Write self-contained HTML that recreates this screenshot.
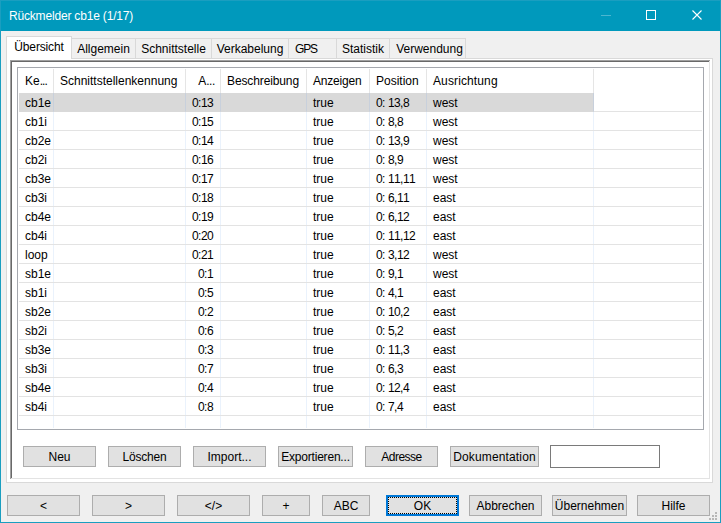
<!DOCTYPE html><html><head><meta charset="utf-8"><style>
*{margin:0;padding:0;box-sizing:border-box}
html,body{width:721px;height:523px;overflow:hidden;background:#f0f0f0}
body{position:relative;font-family:"Liberation Sans",sans-serif;font-size:12px;color:#000}
.a{position:absolute}
.t{position:absolute;line-height:20px;white-space:nowrap;height:20px}
.btn{position:absolute;background:#e1e1e1;border:1px solid #adadad}
</style></head><body>
<div class="a" style="left:0px;top:0px;width:721px;height:523px;background:#1a9ec0;"></div>
<div class="a" style="left:1px;top:1px;width:719px;height:521px;background:#0099bc;"></div>
<div class="a" style="left:1px;top:31px;width:719px;height:491px;background:#f0f0f0;"></div>
<div class="a" style="left:2px;top:31px;width:717px;height:490px;background:#f0f0f0;"></div>
<div class="t" style="left:9px;top:6px;color:#fff;letter-spacing:-0.18px">Rückmelder cb1e (1/17)</div>
<div class="a" style="left:601px;top:15px;width:10px;height:1px;background:#4cb6d0;"></div>
<div class="a" style="left:646px;top:10px;width:10px;height:10px;border:1px solid #fff"></div>
<svg class="a" style="left:691px;top:9px" width="12" height="12" viewBox="0 0 12 12"><path d="M1.5 1.5L10.5 10.5M10.5 1.5L1.5 10.5" stroke="#fff" stroke-width="1.1" fill="none"/></svg>
<div class="a" style="left:6px;top:58px;width:707px;height:425px;background:#d9d9d9;"></div>
<div class="a" style="left:7px;top:59px;width:705px;height:423px;background:#ffffff;"></div>
<div class="a" style="left:71px;top:38px;width:65px;height:21px;background:#d9d9d9;"></div>
<div class="a" style="left:72px;top:39px;width:63px;height:19px;background:#f0f0f0;"></div>
<div class="a" style="left:135px;top:38px;width:77px;height:21px;background:#d9d9d9;"></div>
<div class="a" style="left:136px;top:39px;width:75px;height:19px;background:#f0f0f0;"></div>
<div class="a" style="left:211px;top:38px;width:78px;height:21px;background:#d9d9d9;"></div>
<div class="a" style="left:212px;top:39px;width:76px;height:19px;background:#f0f0f0;"></div>
<div class="a" style="left:288px;top:38px;width:49px;height:21px;background:#d9d9d9;"></div>
<div class="a" style="left:289px;top:39px;width:47px;height:19px;background:#f0f0f0;"></div>
<div class="a" style="left:336px;top:38px;width:54px;height:21px;background:#d9d9d9;"></div>
<div class="a" style="left:337px;top:39px;width:52px;height:19px;background:#f0f0f0;"></div>
<div class="a" style="left:389px;top:38px;width:77px;height:21px;background:#d9d9d9;"></div>
<div class="a" style="left:390px;top:39px;width:75px;height:19px;background:#f0f0f0;"></div>
<div class="t" style="left:72px;top:39px;width:63px;text-align:center;">Allgemein</div>
<div class="t" style="left:136px;top:39px;width:75px;text-align:center;">Schnittstelle</div>
<div class="t" style="left:212px;top:39px;width:76px;text-align:center;">Verkabelung</div>
<div class="t" style="left:295px;top:39px;letter-spacing:-1.2px">GPS</div>
<div class="t" style="left:337px;top:39px;width:52px;text-align:center;">Statistik</div>
<div class="t" style="left:392px;top:39px;width:75px;text-align:center;">Verwendung</div>
<div class="a" style="left:6px;top:36px;width:66px;height:23px;background:#d9d9d9;"></div>
<div class="a" style="left:7px;top:37px;width:64px;height:23px;background:#ffffff;"></div>
<div class="t" style="left:7px;top:37px;width:64px;text-align:center;letter-spacing:-0.15px">Übersicht</div>
<div class="a" style="left:10px;top:60px;width:701px;height:420px;background:#ffffff;"></div>
<div class="a" style="left:10px;top:60px;width:700px;height:419px;background:#e3e3e3;"></div>
<div class="a" style="left:10px;top:60px;width:700px;height:1px;background:#a0a0a0;"></div>
<div class="a" style="left:10px;top:60px;width:1px;height:419px;background:#a0a0a0;"></div>
<div class="a" style="left:11px;top:61px;width:698px;height:1px;background:#696969;"></div>
<div class="a" style="left:11px;top:61px;width:1px;height:417px;background:#696969;"></div>
<div class="a" style="left:12px;top:62px;width:697px;height:416px;background:#ffffff;"></div>
<div class="a" style="left:17px;top:67px;width:687px;height:363px;background:#a5a8ae;"></div>
<div class="a" style="left:18px;top:68px;width:685px;height:361px;background:#ffffff;"></div>
<div class="a" style="left:53px;top:69px;width:1px;height:24px;background:#e5e5e5;"></div>
<div class="a" style="left:185px;top:69px;width:1px;height:24px;background:#e5e5e5;"></div>
<div class="a" style="left:220px;top:69px;width:1px;height:24px;background:#e5e5e5;"></div>
<div class="a" style="left:306px;top:69px;width:1px;height:24px;background:#e5e5e5;"></div>
<div class="a" style="left:369px;top:69px;width:1px;height:24px;background:#e5e5e5;"></div>
<div class="a" style="left:426px;top:69px;width:1px;height:24px;background:#e5e5e5;"></div>
<div class="a" style="left:593px;top:69px;width:1px;height:24px;background:#e5e5e5;"></div>
<div class="a" style="left:19px;top:111px;width:683px;height:1px;background:#e3e3e3;"></div>
<div class="a" style="left:19px;top:130px;width:683px;height:1px;background:#e3e3e3;"></div>
<div class="a" style="left:19px;top:149px;width:683px;height:1px;background:#e3e3e3;"></div>
<div class="a" style="left:19px;top:168px;width:683px;height:1px;background:#e3e3e3;"></div>
<div class="a" style="left:19px;top:187px;width:683px;height:1px;background:#e3e3e3;"></div>
<div class="a" style="left:19px;top:206px;width:683px;height:1px;background:#e3e3e3;"></div>
<div class="a" style="left:19px;top:225px;width:683px;height:1px;background:#e3e3e3;"></div>
<div class="a" style="left:19px;top:244px;width:683px;height:1px;background:#e3e3e3;"></div>
<div class="a" style="left:19px;top:263px;width:683px;height:1px;background:#e3e3e3;"></div>
<div class="a" style="left:19px;top:282px;width:683px;height:1px;background:#e3e3e3;"></div>
<div class="a" style="left:19px;top:301px;width:683px;height:1px;background:#e3e3e3;"></div>
<div class="a" style="left:19px;top:320px;width:683px;height:1px;background:#e3e3e3;"></div>
<div class="a" style="left:19px;top:339px;width:683px;height:1px;background:#e3e3e3;"></div>
<div class="a" style="left:19px;top:358px;width:683px;height:1px;background:#e3e3e3;"></div>
<div class="a" style="left:19px;top:377px;width:683px;height:1px;background:#e3e3e3;"></div>
<div class="a" style="left:19px;top:396px;width:683px;height:1px;background:#e3e3e3;"></div>
<div class="a" style="left:19px;top:415px;width:683px;height:1px;background:#e3e3e3;"></div>
<div class="a" style="left:19px;top:93px;width:575px;height:19px;background:#d9d9d9;"></div>
<div class="a" style="left:53px;top:112px;width:1px;height:316px;background:#eaf2fc;"></div>
<div class="a" style="left:53px;top:93px;width:1px;height:18px;background:#c8d0dc;"></div>
<div class="a" style="left:53px;top:111px;width:1px;height:1px;background:#d0d4da;"></div>
<div class="a" style="left:185px;top:112px;width:1px;height:316px;background:#eaf2fc;"></div>
<div class="a" style="left:185px;top:93px;width:1px;height:18px;background:#c8d0dc;"></div>
<div class="a" style="left:185px;top:111px;width:1px;height:1px;background:#d0d4da;"></div>
<div class="a" style="left:220px;top:112px;width:1px;height:316px;background:#eaf2fc;"></div>
<div class="a" style="left:220px;top:93px;width:1px;height:18px;background:#c8d0dc;"></div>
<div class="a" style="left:220px;top:111px;width:1px;height:1px;background:#d0d4da;"></div>
<div class="a" style="left:306px;top:112px;width:1px;height:316px;background:#eaf2fc;"></div>
<div class="a" style="left:306px;top:93px;width:1px;height:18px;background:#c8d0dc;"></div>
<div class="a" style="left:306px;top:111px;width:1px;height:1px;background:#d0d4da;"></div>
<div class="a" style="left:369px;top:112px;width:1px;height:316px;background:#eaf2fc;"></div>
<div class="a" style="left:369px;top:93px;width:1px;height:18px;background:#c8d0dc;"></div>
<div class="a" style="left:369px;top:111px;width:1px;height:1px;background:#d0d4da;"></div>
<div class="a" style="left:426px;top:112px;width:1px;height:316px;background:#eaf2fc;"></div>
<div class="a" style="left:426px;top:93px;width:1px;height:18px;background:#c8d0dc;"></div>
<div class="a" style="left:426px;top:111px;width:1px;height:1px;background:#d0d4da;"></div>
<div class="a" style="left:593px;top:112px;width:1px;height:316px;background:#eaf2fc;"></div>
<div class="a" style="left:593px;top:93px;width:1px;height:18px;background:#c8d0dc;"></div>
<div class="a" style="left:593px;top:111px;width:1px;height:1px;background:#d0d4da;"></div>
<div class="a" style="left:53px;top:130px;width:1px;height:1px;background:#e3e3e3;"></div>
<div class="a" style="left:185px;top:130px;width:1px;height:1px;background:#e3e3e3;"></div>
<div class="a" style="left:220px;top:130px;width:1px;height:1px;background:#e3e3e3;"></div>
<div class="a" style="left:306px;top:130px;width:1px;height:1px;background:#e3e3e3;"></div>
<div class="a" style="left:369px;top:130px;width:1px;height:1px;background:#e3e3e3;"></div>
<div class="a" style="left:426px;top:130px;width:1px;height:1px;background:#e3e3e3;"></div>
<div class="a" style="left:593px;top:130px;width:1px;height:1px;background:#e3e3e3;"></div>
<div class="a" style="left:53px;top:149px;width:1px;height:1px;background:#e3e3e3;"></div>
<div class="a" style="left:185px;top:149px;width:1px;height:1px;background:#e3e3e3;"></div>
<div class="a" style="left:220px;top:149px;width:1px;height:1px;background:#e3e3e3;"></div>
<div class="a" style="left:306px;top:149px;width:1px;height:1px;background:#e3e3e3;"></div>
<div class="a" style="left:369px;top:149px;width:1px;height:1px;background:#e3e3e3;"></div>
<div class="a" style="left:426px;top:149px;width:1px;height:1px;background:#e3e3e3;"></div>
<div class="a" style="left:593px;top:149px;width:1px;height:1px;background:#e3e3e3;"></div>
<div class="a" style="left:53px;top:168px;width:1px;height:1px;background:#e3e3e3;"></div>
<div class="a" style="left:185px;top:168px;width:1px;height:1px;background:#e3e3e3;"></div>
<div class="a" style="left:220px;top:168px;width:1px;height:1px;background:#e3e3e3;"></div>
<div class="a" style="left:306px;top:168px;width:1px;height:1px;background:#e3e3e3;"></div>
<div class="a" style="left:369px;top:168px;width:1px;height:1px;background:#e3e3e3;"></div>
<div class="a" style="left:426px;top:168px;width:1px;height:1px;background:#e3e3e3;"></div>
<div class="a" style="left:593px;top:168px;width:1px;height:1px;background:#e3e3e3;"></div>
<div class="a" style="left:53px;top:187px;width:1px;height:1px;background:#e3e3e3;"></div>
<div class="a" style="left:185px;top:187px;width:1px;height:1px;background:#e3e3e3;"></div>
<div class="a" style="left:220px;top:187px;width:1px;height:1px;background:#e3e3e3;"></div>
<div class="a" style="left:306px;top:187px;width:1px;height:1px;background:#e3e3e3;"></div>
<div class="a" style="left:369px;top:187px;width:1px;height:1px;background:#e3e3e3;"></div>
<div class="a" style="left:426px;top:187px;width:1px;height:1px;background:#e3e3e3;"></div>
<div class="a" style="left:593px;top:187px;width:1px;height:1px;background:#e3e3e3;"></div>
<div class="a" style="left:53px;top:206px;width:1px;height:1px;background:#e3e3e3;"></div>
<div class="a" style="left:185px;top:206px;width:1px;height:1px;background:#e3e3e3;"></div>
<div class="a" style="left:220px;top:206px;width:1px;height:1px;background:#e3e3e3;"></div>
<div class="a" style="left:306px;top:206px;width:1px;height:1px;background:#e3e3e3;"></div>
<div class="a" style="left:369px;top:206px;width:1px;height:1px;background:#e3e3e3;"></div>
<div class="a" style="left:426px;top:206px;width:1px;height:1px;background:#e3e3e3;"></div>
<div class="a" style="left:593px;top:206px;width:1px;height:1px;background:#e3e3e3;"></div>
<div class="a" style="left:53px;top:225px;width:1px;height:1px;background:#e3e3e3;"></div>
<div class="a" style="left:185px;top:225px;width:1px;height:1px;background:#e3e3e3;"></div>
<div class="a" style="left:220px;top:225px;width:1px;height:1px;background:#e3e3e3;"></div>
<div class="a" style="left:306px;top:225px;width:1px;height:1px;background:#e3e3e3;"></div>
<div class="a" style="left:369px;top:225px;width:1px;height:1px;background:#e3e3e3;"></div>
<div class="a" style="left:426px;top:225px;width:1px;height:1px;background:#e3e3e3;"></div>
<div class="a" style="left:593px;top:225px;width:1px;height:1px;background:#e3e3e3;"></div>
<div class="a" style="left:53px;top:244px;width:1px;height:1px;background:#e3e3e3;"></div>
<div class="a" style="left:185px;top:244px;width:1px;height:1px;background:#e3e3e3;"></div>
<div class="a" style="left:220px;top:244px;width:1px;height:1px;background:#e3e3e3;"></div>
<div class="a" style="left:306px;top:244px;width:1px;height:1px;background:#e3e3e3;"></div>
<div class="a" style="left:369px;top:244px;width:1px;height:1px;background:#e3e3e3;"></div>
<div class="a" style="left:426px;top:244px;width:1px;height:1px;background:#e3e3e3;"></div>
<div class="a" style="left:593px;top:244px;width:1px;height:1px;background:#e3e3e3;"></div>
<div class="a" style="left:53px;top:263px;width:1px;height:1px;background:#e3e3e3;"></div>
<div class="a" style="left:185px;top:263px;width:1px;height:1px;background:#e3e3e3;"></div>
<div class="a" style="left:220px;top:263px;width:1px;height:1px;background:#e3e3e3;"></div>
<div class="a" style="left:306px;top:263px;width:1px;height:1px;background:#e3e3e3;"></div>
<div class="a" style="left:369px;top:263px;width:1px;height:1px;background:#e3e3e3;"></div>
<div class="a" style="left:426px;top:263px;width:1px;height:1px;background:#e3e3e3;"></div>
<div class="a" style="left:593px;top:263px;width:1px;height:1px;background:#e3e3e3;"></div>
<div class="a" style="left:53px;top:282px;width:1px;height:1px;background:#e3e3e3;"></div>
<div class="a" style="left:185px;top:282px;width:1px;height:1px;background:#e3e3e3;"></div>
<div class="a" style="left:220px;top:282px;width:1px;height:1px;background:#e3e3e3;"></div>
<div class="a" style="left:306px;top:282px;width:1px;height:1px;background:#e3e3e3;"></div>
<div class="a" style="left:369px;top:282px;width:1px;height:1px;background:#e3e3e3;"></div>
<div class="a" style="left:426px;top:282px;width:1px;height:1px;background:#e3e3e3;"></div>
<div class="a" style="left:593px;top:282px;width:1px;height:1px;background:#e3e3e3;"></div>
<div class="a" style="left:53px;top:301px;width:1px;height:1px;background:#e3e3e3;"></div>
<div class="a" style="left:185px;top:301px;width:1px;height:1px;background:#e3e3e3;"></div>
<div class="a" style="left:220px;top:301px;width:1px;height:1px;background:#e3e3e3;"></div>
<div class="a" style="left:306px;top:301px;width:1px;height:1px;background:#e3e3e3;"></div>
<div class="a" style="left:369px;top:301px;width:1px;height:1px;background:#e3e3e3;"></div>
<div class="a" style="left:426px;top:301px;width:1px;height:1px;background:#e3e3e3;"></div>
<div class="a" style="left:593px;top:301px;width:1px;height:1px;background:#e3e3e3;"></div>
<div class="a" style="left:53px;top:320px;width:1px;height:1px;background:#e3e3e3;"></div>
<div class="a" style="left:185px;top:320px;width:1px;height:1px;background:#e3e3e3;"></div>
<div class="a" style="left:220px;top:320px;width:1px;height:1px;background:#e3e3e3;"></div>
<div class="a" style="left:306px;top:320px;width:1px;height:1px;background:#e3e3e3;"></div>
<div class="a" style="left:369px;top:320px;width:1px;height:1px;background:#e3e3e3;"></div>
<div class="a" style="left:426px;top:320px;width:1px;height:1px;background:#e3e3e3;"></div>
<div class="a" style="left:593px;top:320px;width:1px;height:1px;background:#e3e3e3;"></div>
<div class="a" style="left:53px;top:339px;width:1px;height:1px;background:#e3e3e3;"></div>
<div class="a" style="left:185px;top:339px;width:1px;height:1px;background:#e3e3e3;"></div>
<div class="a" style="left:220px;top:339px;width:1px;height:1px;background:#e3e3e3;"></div>
<div class="a" style="left:306px;top:339px;width:1px;height:1px;background:#e3e3e3;"></div>
<div class="a" style="left:369px;top:339px;width:1px;height:1px;background:#e3e3e3;"></div>
<div class="a" style="left:426px;top:339px;width:1px;height:1px;background:#e3e3e3;"></div>
<div class="a" style="left:593px;top:339px;width:1px;height:1px;background:#e3e3e3;"></div>
<div class="a" style="left:53px;top:358px;width:1px;height:1px;background:#e3e3e3;"></div>
<div class="a" style="left:185px;top:358px;width:1px;height:1px;background:#e3e3e3;"></div>
<div class="a" style="left:220px;top:358px;width:1px;height:1px;background:#e3e3e3;"></div>
<div class="a" style="left:306px;top:358px;width:1px;height:1px;background:#e3e3e3;"></div>
<div class="a" style="left:369px;top:358px;width:1px;height:1px;background:#e3e3e3;"></div>
<div class="a" style="left:426px;top:358px;width:1px;height:1px;background:#e3e3e3;"></div>
<div class="a" style="left:593px;top:358px;width:1px;height:1px;background:#e3e3e3;"></div>
<div class="a" style="left:53px;top:377px;width:1px;height:1px;background:#e3e3e3;"></div>
<div class="a" style="left:185px;top:377px;width:1px;height:1px;background:#e3e3e3;"></div>
<div class="a" style="left:220px;top:377px;width:1px;height:1px;background:#e3e3e3;"></div>
<div class="a" style="left:306px;top:377px;width:1px;height:1px;background:#e3e3e3;"></div>
<div class="a" style="left:369px;top:377px;width:1px;height:1px;background:#e3e3e3;"></div>
<div class="a" style="left:426px;top:377px;width:1px;height:1px;background:#e3e3e3;"></div>
<div class="a" style="left:593px;top:377px;width:1px;height:1px;background:#e3e3e3;"></div>
<div class="a" style="left:53px;top:396px;width:1px;height:1px;background:#e3e3e3;"></div>
<div class="a" style="left:185px;top:396px;width:1px;height:1px;background:#e3e3e3;"></div>
<div class="a" style="left:220px;top:396px;width:1px;height:1px;background:#e3e3e3;"></div>
<div class="a" style="left:306px;top:396px;width:1px;height:1px;background:#e3e3e3;"></div>
<div class="a" style="left:369px;top:396px;width:1px;height:1px;background:#e3e3e3;"></div>
<div class="a" style="left:426px;top:396px;width:1px;height:1px;background:#e3e3e3;"></div>
<div class="a" style="left:593px;top:396px;width:1px;height:1px;background:#e3e3e3;"></div>
<div class="a" style="left:53px;top:415px;width:1px;height:1px;background:#e3e3e3;"></div>
<div class="a" style="left:185px;top:415px;width:1px;height:1px;background:#e3e3e3;"></div>
<div class="a" style="left:220px;top:415px;width:1px;height:1px;background:#e3e3e3;"></div>
<div class="a" style="left:306px;top:415px;width:1px;height:1px;background:#e3e3e3;"></div>
<div class="a" style="left:369px;top:415px;width:1px;height:1px;background:#e3e3e3;"></div>
<div class="a" style="left:426px;top:415px;width:1px;height:1px;background:#e3e3e3;"></div>
<div class="a" style="left:593px;top:415px;width:1px;height:1px;background:#e3e3e3;"></div>
<div class="t" style="left:25px;top:71px;">Ke<span style="letter-spacing:-0.9px">...</span></div>
<div class="t" style="left:60px;top:71px;">Schnittstellenkennung</div>
<div class="t" style="left:15px;top:71px;width:200px;text-align:right;">A<span style="letter-spacing:-0.4px">...</span></div>
<div class="t" style="left:227px;top:71px;letter-spacing:-0.12px">Beschreibung</div>
<div class="t" style="left:313px;top:71px;letter-spacing:-0.2px">Anzeigen</div>
<div class="t" style="left:376px;top:71px;">Position</div>
<div class="t" style="left:433px;top:71px;letter-spacing:0.12px">Ausrichtung</div>
<div class="t" style="left:25px;top:93px;">cb1e</div>
<div class="t" style="left:192px;top:93px">0</div>
<div class="t" style="left:198px;top:93px">:</div>
<div class="t" style="left:201px;top:93px">1</div>
<div class="t" style="left:207px;top:93px">3</div>
<div class="t" style="left:313px;top:93px;">true</div>
<div class="t" style="left:376px;top:93px">0</div>
<div class="t" style="left:382px;top:93px">:</div>
<div class="t" style="left:388px;top:93px">1</div>
<div class="t" style="left:394px;top:93px">3</div>
<div class="t" style="left:400px;top:93px">,</div>
<div class="t" style="left:403px;top:93px">8</div>
<div class="t" style="left:433px;top:93px;">west</div>
<div class="t" style="left:25px;top:112px;">cb1i</div>
<div class="t" style="left:192px;top:112px">0</div>
<div class="t" style="left:198px;top:112px">:</div>
<div class="t" style="left:201px;top:112px">1</div>
<div class="t" style="left:207px;top:112px">5</div>
<div class="t" style="left:313px;top:112px;">true</div>
<div class="t" style="left:376px;top:112px">0</div>
<div class="t" style="left:382px;top:112px">:</div>
<div class="t" style="left:388px;top:112px">8</div>
<div class="t" style="left:394px;top:112px">,</div>
<div class="t" style="left:397px;top:112px">8</div>
<div class="t" style="left:433px;top:112px;">west</div>
<div class="t" style="left:25px;top:131px;">cb2e</div>
<div class="t" style="left:192px;top:131px">0</div>
<div class="t" style="left:198px;top:131px">:</div>
<div class="t" style="left:201px;top:131px">1</div>
<div class="t" style="left:207px;top:131px">4</div>
<div class="t" style="left:313px;top:131px;">true</div>
<div class="t" style="left:376px;top:131px">0</div>
<div class="t" style="left:382px;top:131px">:</div>
<div class="t" style="left:388px;top:131px">1</div>
<div class="t" style="left:394px;top:131px">3</div>
<div class="t" style="left:400px;top:131px">,</div>
<div class="t" style="left:403px;top:131px">9</div>
<div class="t" style="left:433px;top:131px;">west</div>
<div class="t" style="left:25px;top:150px;">cb2i</div>
<div class="t" style="left:192px;top:150px">0</div>
<div class="t" style="left:198px;top:150px">:</div>
<div class="t" style="left:201px;top:150px">1</div>
<div class="t" style="left:207px;top:150px">6</div>
<div class="t" style="left:313px;top:150px;">true</div>
<div class="t" style="left:376px;top:150px">0</div>
<div class="t" style="left:382px;top:150px">:</div>
<div class="t" style="left:388px;top:150px">8</div>
<div class="t" style="left:394px;top:150px">,</div>
<div class="t" style="left:397px;top:150px">9</div>
<div class="t" style="left:433px;top:150px;">west</div>
<div class="t" style="left:25px;top:169px;">cb3e</div>
<div class="t" style="left:192px;top:169px">0</div>
<div class="t" style="left:198px;top:169px">:</div>
<div class="t" style="left:201px;top:169px">1</div>
<div class="t" style="left:207px;top:169px">7</div>
<div class="t" style="left:313px;top:169px;">true</div>
<div class="t" style="left:376px;top:169px">0</div>
<div class="t" style="left:382px;top:169px">:</div>
<div class="t" style="left:388px;top:169px">1</div>
<div class="t" style="left:394px;top:169px">1</div>
<div class="t" style="left:400px;top:169px">,</div>
<div class="t" style="left:403px;top:169px">1</div>
<div class="t" style="left:409px;top:169px">1</div>
<div class="t" style="left:433px;top:169px;">west</div>
<div class="t" style="left:25px;top:188px;">cb3i</div>
<div class="t" style="left:192px;top:188px">0</div>
<div class="t" style="left:198px;top:188px">:</div>
<div class="t" style="left:201px;top:188px">1</div>
<div class="t" style="left:207px;top:188px">8</div>
<div class="t" style="left:313px;top:188px;">true</div>
<div class="t" style="left:376px;top:188px">0</div>
<div class="t" style="left:382px;top:188px">:</div>
<div class="t" style="left:388px;top:188px">6</div>
<div class="t" style="left:394px;top:188px">,</div>
<div class="t" style="left:397px;top:188px">1</div>
<div class="t" style="left:403px;top:188px">1</div>
<div class="t" style="left:433px;top:188px;">east</div>
<div class="t" style="left:25px;top:207px;">cb4e</div>
<div class="t" style="left:192px;top:207px">0</div>
<div class="t" style="left:198px;top:207px">:</div>
<div class="t" style="left:201px;top:207px">1</div>
<div class="t" style="left:207px;top:207px">9</div>
<div class="t" style="left:313px;top:207px;">true</div>
<div class="t" style="left:376px;top:207px">0</div>
<div class="t" style="left:382px;top:207px">:</div>
<div class="t" style="left:388px;top:207px">6</div>
<div class="t" style="left:394px;top:207px">,</div>
<div class="t" style="left:397px;top:207px">1</div>
<div class="t" style="left:403px;top:207px">2</div>
<div class="t" style="left:433px;top:207px;">east</div>
<div class="t" style="left:25px;top:226px;">cb4i</div>
<div class="t" style="left:192px;top:226px">0</div>
<div class="t" style="left:198px;top:226px">:</div>
<div class="t" style="left:201px;top:226px">2</div>
<div class="t" style="left:207px;top:226px">0</div>
<div class="t" style="left:313px;top:226px;">true</div>
<div class="t" style="left:376px;top:226px">0</div>
<div class="t" style="left:382px;top:226px">:</div>
<div class="t" style="left:388px;top:226px">1</div>
<div class="t" style="left:394px;top:226px">1</div>
<div class="t" style="left:400px;top:226px">,</div>
<div class="t" style="left:403px;top:226px">1</div>
<div class="t" style="left:409px;top:226px">2</div>
<div class="t" style="left:433px;top:226px;">east</div>
<div class="t" style="left:25px;top:245px;">loop</div>
<div class="t" style="left:192px;top:245px">0</div>
<div class="t" style="left:198px;top:245px">:</div>
<div class="t" style="left:201px;top:245px">2</div>
<div class="t" style="left:207px;top:245px">1</div>
<div class="t" style="left:313px;top:245px;">true</div>
<div class="t" style="left:376px;top:245px">0</div>
<div class="t" style="left:382px;top:245px">:</div>
<div class="t" style="left:388px;top:245px">3</div>
<div class="t" style="left:394px;top:245px">,</div>
<div class="t" style="left:397px;top:245px">1</div>
<div class="t" style="left:403px;top:245px">2</div>
<div class="t" style="left:433px;top:245px;">west</div>
<div class="t" style="left:25px;top:264px;">sb1e</div>
<div class="t" style="left:198px;top:264px">0</div>
<div class="t" style="left:204px;top:264px">:</div>
<div class="t" style="left:207px;top:264px">1</div>
<div class="t" style="left:313px;top:264px;">true</div>
<div class="t" style="left:376px;top:264px">0</div>
<div class="t" style="left:382px;top:264px">:</div>
<div class="t" style="left:388px;top:264px">9</div>
<div class="t" style="left:394px;top:264px">,</div>
<div class="t" style="left:397px;top:264px">1</div>
<div class="t" style="left:433px;top:264px;">west</div>
<div class="t" style="left:25px;top:283px;">sb1i</div>
<div class="t" style="left:198px;top:283px">0</div>
<div class="t" style="left:204px;top:283px">:</div>
<div class="t" style="left:207px;top:283px">5</div>
<div class="t" style="left:313px;top:283px;">true</div>
<div class="t" style="left:376px;top:283px">0</div>
<div class="t" style="left:382px;top:283px">:</div>
<div class="t" style="left:388px;top:283px">4</div>
<div class="t" style="left:394px;top:283px">,</div>
<div class="t" style="left:397px;top:283px">1</div>
<div class="t" style="left:433px;top:283px;">east</div>
<div class="t" style="left:25px;top:302px;">sb2e</div>
<div class="t" style="left:198px;top:302px">0</div>
<div class="t" style="left:204px;top:302px">:</div>
<div class="t" style="left:207px;top:302px">2</div>
<div class="t" style="left:313px;top:302px;">true</div>
<div class="t" style="left:376px;top:302px">0</div>
<div class="t" style="left:382px;top:302px">:</div>
<div class="t" style="left:388px;top:302px">1</div>
<div class="t" style="left:394px;top:302px">0</div>
<div class="t" style="left:400px;top:302px">,</div>
<div class="t" style="left:403px;top:302px">2</div>
<div class="t" style="left:433px;top:302px;">east</div>
<div class="t" style="left:25px;top:321px;">sb2i</div>
<div class="t" style="left:198px;top:321px">0</div>
<div class="t" style="left:204px;top:321px">:</div>
<div class="t" style="left:207px;top:321px">6</div>
<div class="t" style="left:313px;top:321px;">true</div>
<div class="t" style="left:376px;top:321px">0</div>
<div class="t" style="left:382px;top:321px">:</div>
<div class="t" style="left:388px;top:321px">5</div>
<div class="t" style="left:394px;top:321px">,</div>
<div class="t" style="left:397px;top:321px">2</div>
<div class="t" style="left:433px;top:321px;">east</div>
<div class="t" style="left:25px;top:340px;">sb3e</div>
<div class="t" style="left:198px;top:340px">0</div>
<div class="t" style="left:204px;top:340px">:</div>
<div class="t" style="left:207px;top:340px">3</div>
<div class="t" style="left:313px;top:340px;">true</div>
<div class="t" style="left:376px;top:340px">0</div>
<div class="t" style="left:382px;top:340px">:</div>
<div class="t" style="left:388px;top:340px">1</div>
<div class="t" style="left:394px;top:340px">1</div>
<div class="t" style="left:400px;top:340px">,</div>
<div class="t" style="left:403px;top:340px">3</div>
<div class="t" style="left:433px;top:340px;">east</div>
<div class="t" style="left:25px;top:359px;">sb3i</div>
<div class="t" style="left:198px;top:359px">0</div>
<div class="t" style="left:204px;top:359px">:</div>
<div class="t" style="left:207px;top:359px">7</div>
<div class="t" style="left:313px;top:359px;">true</div>
<div class="t" style="left:376px;top:359px">0</div>
<div class="t" style="left:382px;top:359px">:</div>
<div class="t" style="left:388px;top:359px">6</div>
<div class="t" style="left:394px;top:359px">,</div>
<div class="t" style="left:397px;top:359px">3</div>
<div class="t" style="left:433px;top:359px;">east</div>
<div class="t" style="left:25px;top:378px;">sb4e</div>
<div class="t" style="left:198px;top:378px">0</div>
<div class="t" style="left:204px;top:378px">:</div>
<div class="t" style="left:207px;top:378px">4</div>
<div class="t" style="left:313px;top:378px;">true</div>
<div class="t" style="left:376px;top:378px">0</div>
<div class="t" style="left:382px;top:378px">:</div>
<div class="t" style="left:388px;top:378px">1</div>
<div class="t" style="left:394px;top:378px">2</div>
<div class="t" style="left:400px;top:378px">,</div>
<div class="t" style="left:403px;top:378px">4</div>
<div class="t" style="left:433px;top:378px;">east</div>
<div class="t" style="left:25px;top:397px;">sb4i</div>
<div class="t" style="left:198px;top:397px">0</div>
<div class="t" style="left:204px;top:397px">:</div>
<div class="t" style="left:207px;top:397px">8</div>
<div class="t" style="left:313px;top:397px;">true</div>
<div class="t" style="left:376px;top:397px">0</div>
<div class="t" style="left:382px;top:397px">:</div>
<div class="t" style="left:388px;top:397px">7</div>
<div class="t" style="left:394px;top:397px">,</div>
<div class="t" style="left:397px;top:397px">4</div>
<div class="t" style="left:433px;top:397px;">east</div>
<div class="a" style="left:23px;top:446px;width:73px;height:21px;background:#adadad;"></div>
<div class="a" style="left:24px;top:447px;width:71px;height:19px;background:#e1e1e1;"></div>
<div class="t" style="left:23px;top:447px;width:73px;text-align:center;">Neu</div>
<div class="a" style="left:108px;top:446px;width:73px;height:21px;background:#adadad;"></div>
<div class="a" style="left:109px;top:447px;width:71px;height:19px;background:#e1e1e1;"></div>
<div class="t" style="left:108px;top:447px;width:73px;text-align:center;letter-spacing:-0.2px">Löschen</div>
<div class="a" style="left:193px;top:446px;width:73px;height:21px;background:#adadad;"></div>
<div class="a" style="left:194px;top:447px;width:71px;height:19px;background:#e1e1e1;"></div>
<div class="t" style="left:193px;top:447px;width:73px;text-align:center;">Import...</div>
<div class="a" style="left:278px;top:446px;width:75px;height:21px;background:#adadad;"></div>
<div class="a" style="left:279px;top:447px;width:73px;height:19px;background:#e1e1e1;"></div>
<div class="t" style="left:278px;top:447px;width:75px;text-align:center;letter-spacing:-0.2px">Exportieren...</div>
<div class="a" style="left:365px;top:446px;width:73px;height:21px;background:#adadad;"></div>
<div class="a" style="left:366px;top:447px;width:71px;height:19px;background:#e1e1e1;"></div>
<div class="t" style="left:365px;top:447px;width:73px;text-align:center;letter-spacing:-0.5px">Adresse</div>
<div class="a" style="left:450px;top:446px;width:89px;height:21px;background:#adadad;"></div>
<div class="a" style="left:451px;top:447px;width:87px;height:19px;background:#e1e1e1;"></div>
<div class="t" style="left:450px;top:447px;width:89px;text-align:center;letter-spacing:0.15px">Dokumentation</div>
<div class="a" style="left:550px;top:445px;width:110px;height:23px;background:#7a7a7a;"></div>
<div class="a" style="left:551px;top:446px;width:108px;height:21px;background:#ffffff;"></div>
<div class="a" style="left:7px;top:495px;width:73px;height:21px;background:#adadad;"></div>
<div class="a" style="left:8px;top:496px;width:71px;height:19px;background:#e1e1e1;"></div>
<div class="t" style="left:7px;top:496px;width:73px;text-align:center;">&lt;</div>
<div class="a" style="left:92px;top:495px;width:73px;height:21px;background:#adadad;"></div>
<div class="a" style="left:93px;top:496px;width:71px;height:19px;background:#e1e1e1;"></div>
<div class="t" style="left:92px;top:496px;width:73px;text-align:center;">&gt;</div>
<div class="a" style="left:177px;top:495px;width:73px;height:21px;background:#adadad;"></div>
<div class="a" style="left:178px;top:496px;width:71px;height:19px;background:#e1e1e1;"></div>
<div class="t" style="left:177px;top:496px;width:73px;text-align:center;">&lt;/&gt;</div>
<div class="a" style="left:262px;top:495px;width:48px;height:21px;background:#adadad;"></div>
<div class="a" style="left:263px;top:496px;width:46px;height:19px;background:#e1e1e1;"></div>
<div class="t" style="left:262px;top:496px;width:48px;text-align:center;">+</div>
<div class="a" style="left:322px;top:495px;width:48px;height:21px;background:#adadad;"></div>
<div class="a" style="left:323px;top:496px;width:46px;height:19px;background:#e1e1e1;"></div>
<div class="t" style="left:322px;top:496px;width:48px;text-align:center;">ABC</div>
<div class="a" style="left:469px;top:495px;width:73px;height:21px;background:#adadad;"></div>
<div class="a" style="left:470px;top:496px;width:71px;height:19px;background:#e1e1e1;"></div>
<div class="t" style="left:469px;top:496px;width:73px;text-align:center;">Abbrechen</div>
<div class="a" style="left:552px;top:495px;width:75px;height:21px;background:#adadad;"></div>
<div class="a" style="left:553px;top:496px;width:73px;height:19px;background:#e1e1e1;"></div>
<div class="t" style="left:552px;top:496px;width:75px;text-align:center;">Übernehmen</div>
<div class="a" style="left:637px;top:495px;width:73px;height:21px;background:#adadad;"></div>
<div class="a" style="left:638px;top:496px;width:71px;height:19px;background:#e1e1e1;"></div>
<div class="t" style="left:637px;top:496px;width:73px;text-align:center;">Hilfe</div>
<div class="a" style="left:386px;top:495px;width:73px;height:21px;background:#0078d7;"></div>
<div class="a" style="left:388px;top:497px;width:69px;height:17px;background:#e1e1e1;"></div>
<div class="a" style="left:388px;top:497px;width:69px;height:17px;border:1px dotted #000"></div>
<div class="t" style="left:386px;top:496px;width:73px;text-align:center;">OK</div>
<div class="a" style="left:715px;top:512px;width:2px;height:2px;background:#b8b8b8;"></div>
<div class="a" style="left:712px;top:515px;width:2px;height:2px;background:#b8b8b8;"></div>
<div class="a" style="left:715px;top:515px;width:2px;height:2px;background:#b8b8b8;"></div>
<div class="a" style="left:709px;top:518px;width:2px;height:2px;background:#b8b8b8;"></div>
<div class="a" style="left:712px;top:518px;width:2px;height:2px;background:#b8b8b8;"></div>
<div class="a" style="left:715px;top:518px;width:2px;height:2px;background:#b8b8b8;"></div>
</body></html>
